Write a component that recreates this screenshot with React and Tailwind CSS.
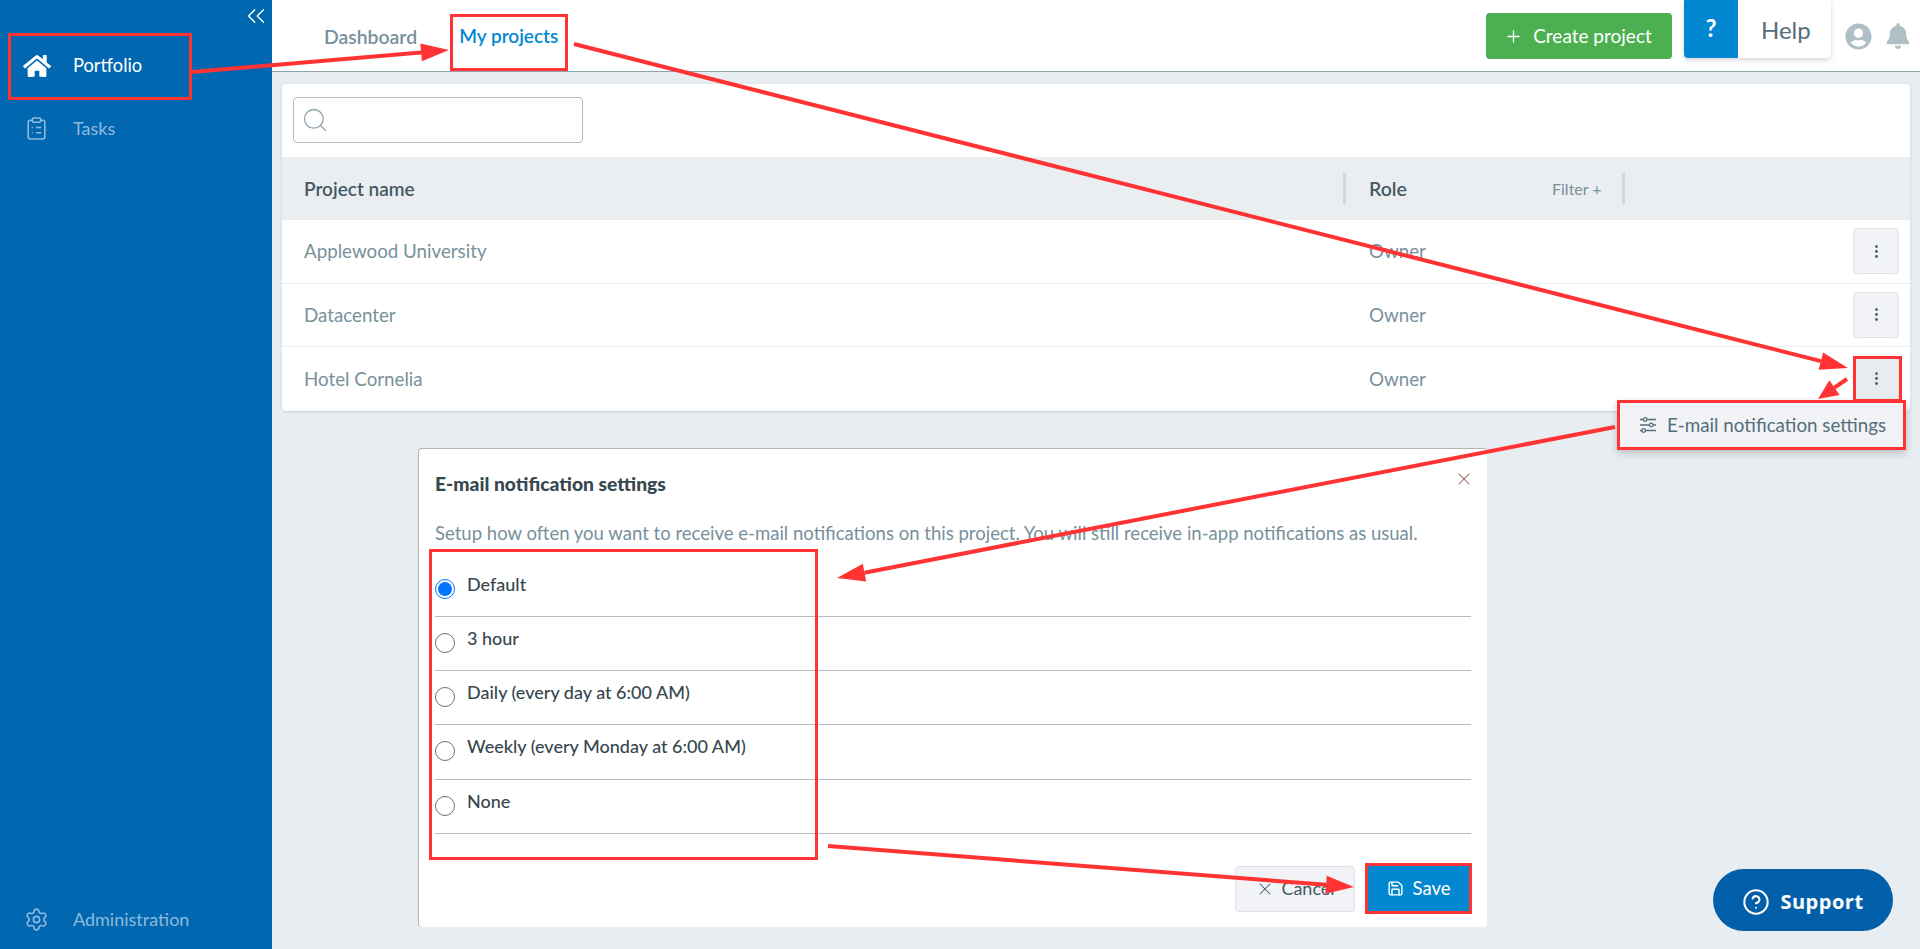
import { ChevronsLeft, ClipboardList, Settings, Search, EllipsisVertical, Plus, X, Save, CircleHelp } from 'lucide-react';
import { FaHome, FaUserCircle, FaBell } from 'react-icons/fa';

const projects = ['Applewood University', 'Datacenter', 'Hotel Cornelia'];
const options = ['Default', '3 hour', 'Daily (every day at 6:00 AM)', 'Weekly (every Monday at 6:00 AM)', 'None'];

function Sidebar() {
  return (
    <aside className="w-[272px] shrink-0 bg-[#0067b0] flex flex-col relative">
      <ChevronsLeft className="absolute left-[241px] top-[1px] text-white" size={30} strokeWidth={1.1} />
      <div className="mt-[33px] h-[66px] flex items-center pl-[23px] text-white">
        <FaHome size={28} />
        <span className="ml-[22px] text-[18.3px]">Portfolio</span>
      </div>
      <div className="h-[58px] flex items-center pl-[24px] text-[#8fbadb]">
        <ClipboardList size={25} strokeWidth={1.5} />
        <span className="ml-[24px] text-[18px]">Tasks</span>
      </div>
      <div className="mt-auto mb-[10px] h-[40px] flex items-center pl-[24px] text-[#8fbadb]">
        <Settings size={25} strokeWidth={1.5} />
        <span className="ml-[24px] text-[18px]">Administration</span>
      </div>
    </aside>
  );
}

function Header() {
  return (
    <header className="h-[72px] bg-white border-b border-[#90a4ae] flex items-start relative">
      <nav className="flex items-start ml-[52px] text-[19.4px] font-semibold">
        <div className="mt-[22px] text-[#78909c]">Dashboard</div>
        <div className="ml-[42px] h-[71px] pt-[22px] border-b-[2px] border-[#0288d1] text-[#0288d1] text-[19px]">My projects</div>
      </nav>
      <div className="ml-auto flex items-start">
        <button className="mt-[13px] h-[46px] w-[186px] rounded bg-[#4caf50] text-white text-[19px] flex items-center justify-center gap-[10px] pr-[2px]">
          <Plus size={19} strokeWidth={1.75} />
          Create project
        </button>
        <div className="ml-[12px] h-[58px] w-[147px] flex bg-white rounded-b shadow-[0_2px_5px_rgba(0,0,0,0.16)] overflow-hidden">
          <div className="w-[54px] bg-[#0288d1] text-white text-[24px] font-bold flex items-center justify-center pb-[2px]">?</div>
          <div className="pl-[23px] pt-[12px] text-[24px] leading-[36px] text-[#546e7a]">Help</div>
        </div>
        <FaUserCircle className="ml-[14px] mt-[23px] text-[#b0bec5]" size={27} />
        <FaBell className="ml-[13px] mt-[23px] text-[#b0bec5]" size={26} />
        <div className="w-[9px]" />
      </div>
    </header>
  );
}

function ProjectCard() {
  return (
    <div className="mt-[12px] mx-[10px] bg-white rounded shadow-[0_1px_3px_rgba(0,0,0,0.12)]">
      <div className="h-[73px] pt-[13px] pl-[11px]">
        <div className="w-[290px] h-[46px] border border-[#b0bec5] rounded flex items-center pl-[7px] text-[#90a4ae]">
          <Search size={28} strokeWidth={1.1} />
        </div>
      </div>
      <div className="h-[63px] bg-[#eaeef1] flex items-center text-[19px] font-semibold text-[#455a64]">
        <div className="pl-[22px] pt-[1px] w-[1061px]">Project name</div>
        <div className="w-[3px] h-[31px] bg-[#cfd8dc]" />
        <div className="pl-[23px] w-[206px] text-[19.5px]">Role</div>
        <div className="w-[62px] text-[16px] font-normal text-[#78909c] whitespace-nowrap">Filter +</div>
        <div className="ml-[8px] w-[3px] h-[31px] bg-[#cfd8dc]" />
      </div>
      {projects.map((name, i) => (
        <div key={name} className={`h-[63.5px] flex items-center text-[18.75px] text-[#78909c] ${i < 2 ? 'border-b border-[#eceff1]' : ''}`}>
          <div className="pl-[22px] w-[1087px]">{name}</div>
          <div className="flex-1">Owner</div>
          <button className={`mr-[11px] w-[46px] h-[46px] rounded border border-[#dfe3e8] flex items-center justify-center text-[#455a64] ${i === 2 ? 'bg-[#e9ecef]' : 'bg-[#f1f3f7]'}`}>
            <EllipsisVertical size={17} />
          </button>
        </div>
      ))}
    </div>
  );
}

function SettingsDialog() {
  return (
    <div className="mt-[37px] ml-[146px] w-[1069px] h-[479px] bg-white rounded border-t border-l border-[#b4b4b4] pl-[16px] pr-[16px] relative flex flex-col">
      <X className="absolute right-[13px] top-[20px] text-[#8d5a55]" size={20} strokeWidth={1.25} />
      <h2 className="mt-[22px] text-[19.3px] leading-[26px] font-black text-[#37474f] whitespace-nowrap">E-mail notification settings</h2>
      <p className="mt-[23px] text-[18.55px] leading-[26px] text-[#78909c] whitespace-nowrap">Setup how often you want to receive e-mail notifications on this project. You will still receive in-app notifications as usual.</p>
      <div className="mt-[17px]">
        {options.map((opt, i) => (
          <div key={opt} className="h-[54.25px] border-b border-[#b0bec5] flex items-start">
            {i === 0 ? (
              <span className="mt-[16px] w-[20px] h-[20px] rounded-full border-[1.5px] border-[#0075ff] flex items-center justify-center">
                <span className="w-[14px] h-[14px] rounded-full bg-[#0075ff]" />
              </span>
            ) : (
              <span className="mt-[16px] w-[20px] h-[20px] rounded-full border-[1.5px] border-[#6f6f6f]" />
            )}
            <span className="ml-[12px] mt-[10px] text-[18px] leading-[22px] font-medium text-[#37474f]">{opt}</span>
          </div>
        ))}
      </div>
      <div className="mt-[32px] flex justify-end gap-[13px]">
        <button className="w-[120px] h-[46px] rounded border border-[#dfe3e8] bg-[#f1f3f7] text-[#455a64] text-[18px] flex items-center justify-center gap-[6px]">
          <X size={20} strokeWidth={1.25} />
          Cancel
        </button>
        <button className="w-[103px] h-[46px] bg-[#0288d1] text-white text-[18.5px] flex items-center justify-center gap-[9px] pr-[2px]">
          <Save size={17} strokeWidth={2} />
          Save
        </button>
      </div>
    </div>
  );
}

function SliderIcon() {
  return (
    <svg width="18" height="18" viewBox="0 0 18 18" fill="none" stroke="currentColor" strokeWidth="1.3">
      <path d="M1 3.5h3.5M8 3.5h9M1 9h9.5M14 9h3M1 14.5h2M6.5 14.5h10.5" />
      <circle cx="6.2" cy="3.5" r="1.8" />
      <circle cx="12.2" cy="9" r="1.8" />
      <circle cx="4.7" cy="14.5" r="1.8" />
    </svg>
  );
}

function Arrow({ x1, y1, x2, y2, head = 28, wide = 9 }) {
  const a = Math.atan2(y2 - y1, x2 - x1);
  const bx = x2 - head * Math.cos(a);
  const by = y2 - head * Math.sin(a);
  const nx = -Math.sin(a) * wide;
  const ny = Math.cos(a) * wide;
  return (
    <g>
      <line x1={x1} y1={y1} x2={bx} y2={by} stroke="#ff3333" strokeWidth="4" />
      <polygon points={`${x2},${y2} ${bx + nx},${by + ny} ${bx - nx},${by - ny}`} fill="#ff3333" />
    </g>
  );
}

// red callouts painted over the screenshot
function Annotations() {
  const box = 'absolute border-[3px] border-[#ff3333] pointer-events-none';
  return (
    <>
      <div className={`${box} left-[8px] top-[33px] w-[184px] h-[67px]`} />
      <div className={`${box} left-[450px] top-[14px] w-[118px] h-[57px]`} />
      <div className={`${box} left-[1853px] top-[356px] w-[49px] h-[46px]`} />
      <div className={`${box} left-[429px] top-[549px] w-[389px] h-[311px]`} />
      <div className={`${box} left-[1365px] top-[863px] w-[107px] h-[51px]`} />
      <svg className="absolute inset-0 pointer-events-none" width="1920" height="949">
        <Arrow x1={192} y1={72} x2={449} y2={50} />
        <Arrow x1={574} y1={44} x2={1848} y2={368} />
        <Arrow x1={1847} y1={379} x2={1818} y2={399} head={20} />
        <Arrow x1={1615} y1={427} x2={837} y2={578} />
        <Arrow x1={828} y1={846} x2={1354} y2={887} />
      </svg>
    </>
  );
}

export default function App() {
  return (
    <div className="w-[1920px] h-[949px] relative overflow-hidden flex bg-[#e8edf1] font-['Lato',sans-serif]">
      <Sidebar />
      <main className="flex-1 min-w-0">
        <Header />
        <ProjectCard />
        <SettingsDialog />
      </main>
      {/* row menu */}
      <div className="absolute left-[1617px] top-[400px] w-[289px] h-[50px] bg-[#f1f3f7] shadow-[0_3px_8px_rgba(0,0,0,0.2)] border-[3px] border-[#ff3333] flex items-center pl-[19px] gap-[10px] text-[18.8px] text-[#546e7a] whitespace-nowrap">
        <SliderIcon />
        E-mail notification settings
      </div>
      <div className="absolute left-[1713px] top-[869px] w-[180px] h-[62px] rounded-full bg-[#0260ab] text-white flex items-center justify-center gap-[10px] pt-[3px] font-['Open_Sans',sans-serif] font-bold text-[20px] tracking-[0.5px]">
        <CircleHelp size={28} strokeWidth={1.75} />
        Support
      </div>
      <Annotations />
    </div>
  );
}
